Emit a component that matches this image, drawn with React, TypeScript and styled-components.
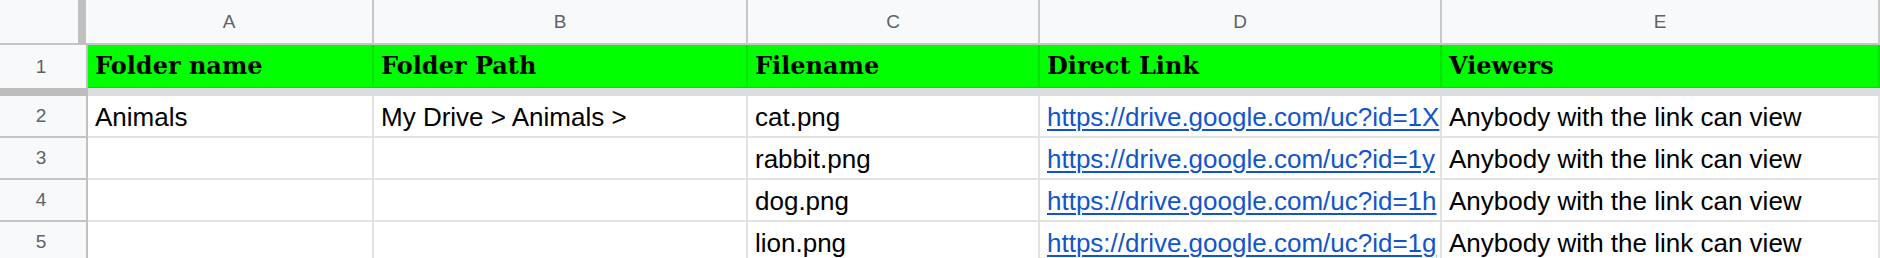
import React from "react";
import styled, { createGlobalStyle } from "styled-components";

const Global = createGlobalStyle`
  html, body { margin: 0; padding: 0; background: #ffffff; overflow: hidden; }
  * { box-sizing: border-box; }
`;

const Sheet = styled.div`
  width: 1880px;
  height: 258px;
  overflow: hidden;
  display: flex;
  flex-direction: column;
  background: #ffffff;
`;

const Row = styled.div<{ $h: number }>`
  display: flex;
  flex: 0 0 ${(p) => p.$h}px;
  height: ${(p) => p.$h}px;
`;

const WIDTHS = [286, 374, 292, 402];

const Corner = styled.div`
  flex: 0 0 86px;
  background: #f8f9fa;
  border-right: 8px solid #c0c0c0;
  border-bottom: 2px solid #c4c4c4;
`;

const ColHead = styled.div<{ $w?: number; $first?: boolean }>`
  ${(p) => (p.$w ? `flex: 0 0 ${p.$w + (p.$first ? 2 : 0)}px;` : "flex: 1 1 auto;")}
  background: #f8f9fa;
  border-right: 2px solid #c7c7c7;
  border-bottom: 2px solid #c4c4c4;
  display: flex;
  align-items: center;
  justify-content: center;
  font-family: "Liberation Sans", Arial, sans-serif;
  font-size: 19px;
  color: #5f6368;
  padding-top: 1px;
`;

const RowHead = styled.div<{ $freeze?: boolean }>`
  flex: 0 0 88px;
  background: #f8f9fa;
  border-right: 2px solid #c0c0c0;
  border-bottom: ${(p) => (p.$freeze ? "none" : "2px solid #c4c4c4")};
  display: flex;
  align-items: center;
  justify-content: center;
  padding-right: 4px;
  font-family: "Liberation Sans", Arial, sans-serif;
  font-size: 19px;
  color: #5f6368;
`;

const HeadCell = styled.div<{ $w?: number }>`
  ${(p) => (p.$w ? `flex: 0 0 ${p.$w}px;` : "flex: 1 1 auto;")}
  background: #00ff00;
  border-right: 2px solid #00e400;
  border-bottom: 1px solid #00dc00;
  display: flex;
  align-items: flex-end;
  padding: 0 7px 9px 7px;
  font-family: "DejaVu Serif", "Liberation Serif", serif;
  font-weight: 700;
  font-size: 24px;
  line-height: 24px;
  color: #000000;
  white-space: nowrap;
  overflow: hidden;
`;

const FreezeHead = styled.div`
  flex: 0 0 88px;
  background: #bdbdbd;
`;

const FreezeBand = styled.div`
  flex: 1 1 auto;
  background: #dadce0;
`;

const Cell = styled.div<{ $w?: number }>`
  ${(p) => (p.$w ? `flex: 0 0 ${p.$w}px;` : "flex: 1 1 auto;")}
  border-right: 2px solid #e2e2e2;
  border-bottom: 2px solid #e2e2e2;
  display: flex;
  align-items: flex-end;
  padding: 0 0 6px 7px;
  font-family: "Liberation Sans", Arial, sans-serif;
  font-size: 26px;
  line-height: 26px;
  color: #000000;
  white-space: nowrap;
  overflow: hidden;
`;

const Link = styled.a`
  color: #1155cc;
  text-decoration: underline;
  text-underline-offset: 3px;
  text-decoration-thickness: 2px;
`;

const rows = [
  { n: 2, folder: "Animals", path: "My Drive > Animals >", file: "cat.png", id: "1X" },
  { n: 3, folder: "", path: "", file: "rabbit.png", id: "1y" },
  { n: 4, folder: "", path: "", file: "dog.png", id: "1h" },
  { n: 5, folder: "", path: "", file: "lion.png", id: "1g" },
];

const headers = ["Folder name", "Folder Path", "Filename", "Direct Link", "Viewers"];
const letters = ["A", "B", "C", "D", "E"];

export default function App() {
  return (
    <>
      <Global />
      <Sheet>
        <Row $h={45}>
          <Corner />
          {letters.map((l, i) => (
            <ColHead key={l} $w={WIDTHS[i]} $first={i === 0}>
              {l}
            </ColHead>
          ))}
        </Row>
        <Row $h={43}>
          <RowHead $freeze>1</RowHead>
          {headers.map((h, i) => (
            <HeadCell key={h} $w={WIDTHS[i]}>
              {h}
            </HeadCell>
          ))}
        </Row>
        <Row $h={8}>
          <FreezeHead />
          <FreezeBand />
        </Row>
        {rows.map((r) => (
          <Row $h={42} key={r.n}>
            <RowHead>{r.n}</RowHead>
            <Cell $w={WIDTHS[0]}>{r.folder}</Cell>
            <Cell $w={WIDTHS[1]}>{r.path}</Cell>
            <Cell $w={WIDTHS[2]}>{r.file}</Cell>
            <Cell $w={WIDTHS[3]}>
              <Link href="#">{`https://drive.google.com/uc?id=${r.id}`}</Link>
            </Cell>
            <Cell>Anybody with the link can view</Cell>
          </Row>
        ))}
      </Sheet>
    </>
  );
}
